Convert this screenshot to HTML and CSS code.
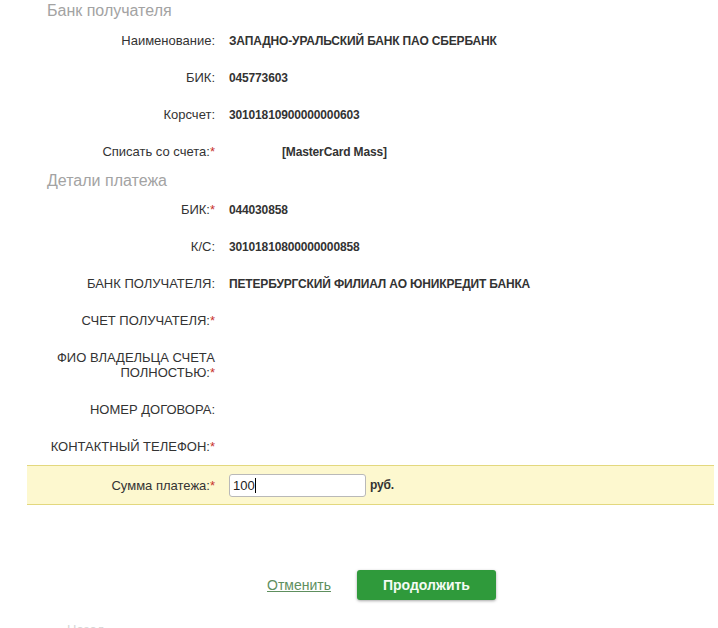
FILE: index.html
```html
<!DOCTYPE html>
<html lang="ru">
<head>
<meta charset="utf-8">
<title>Платеж</title>
<link rel="stylesheet" href="styles.css">
</head>
<body>
<div class="page">
  <div class="heading">Банк получателя</div>
  <div class="row"><div class="label">Наименование:</div><div class="value">ЗАПАДНО-УРАЛЬСКИЙ БАНК ПАО СБЕРБАНК</div></div>
  <div class="row"><div class="label">БИК:</div><div class="value">045773603</div></div>
  <div class="row"><div class="label">Корсчет:</div><div class="value">30101810900000000603</div></div>
  <div class="row"><div class="label">Списать со счета:<span class="req">*</span></div><div class="value value-select">[MasterCard Mass]</div></div>

  <div class="heading heading-2">Детали платежа</div>
  <div class="row"><div class="label">БИК:<span class="req">*</span></div><div class="value">044030858</div></div>
  <div class="row"><div class="label">К/С:</div><div class="value">30101810800000000858</div></div>
  <div class="row"><div class="label">БАНК ПОЛУЧАТЕЛЯ:</div><div class="value">ПЕТЕРБУРГСКИЙ ФИЛИАЛ АО ЮНИКРЕДИТ БАНКА</div></div>
  <div class="row"><div class="label">СЧЕТ ПОЛУЧАТЕЛЯ:<span class="req">*</span></div><div class="value"></div></div>
  <div class="row row-tall"><div class="label">ФИО ВЛАДЕЛЬЦА СЧЕТА<br>ПОЛНОСТЬЮ:<span class="req">*</span></div><div class="value"></div></div>
  <div class="row"><div class="label">НОМЕР ДОГОВОРА:</div><div class="value"></div></div>
  <div class="row"><div class="label">КОНТАКТНЫЙ ТЕЛЕФОН:<span class="req">*</span></div><div class="value"></div></div>

  <div class="row row-sum">
    <div class="label">Сумма платежа:<span class="req">*</span></div>
    <div class="value value-sum"><span class="input">100<span class="caret"></span></span><span class="currency">руб.</span></div>
  </div>

  <div class="actions">
    <a class="cancel" href="#">Отменить</a>
    <button class="submit" type="button">Продолжить</button>
  </div>
  <div class="footnote">Назад</div>
</div>
</body>
</html>
```

FILE: styles.css
```css
html, body {
  margin: 0;
  padding: 0;
  background: #ffffff;
  overflow: hidden;
}

body {
  font-family: "Liberation Sans", Arial, sans-serif;
  color: #333333;
  width: 718px;
  height: 628px;
}

.page {
  padding: 0 4px 0 27px;
}

.heading {
  height: 22px;
  line-height: 22px;
  padding-left: 20px;
  font-size: 16px;
  color: #a3a3a3;
}

.heading-2 {
  height: 21px;
  line-height: 21px;
}

.row {
  display: grid;
  grid-template-columns: 188px 1fr;
  column-gap: 14px;
  align-items: center;
  height: 37px;
}

.row-tall {
  height: 52px;
}

.label {
  text-align: right;
  font-size: 13px;
  line-height: 15px;
  color: #333333;
}

.req {
  color: #c8332c;
}

.value {
  font-size: 12px;
  font-weight: bold;
  color: #333333;
  letter-spacing: -0.15px;
}

.value-select {
  padding-left: 53px;
}

.row-sum {
  box-sizing: border-box;
  height: 40px;
  background: #fdf8cf;
  border-top: 1px solid #e3d87e;
  border-bottom: 1px solid #e3d87e;
}

.value-sum {
  display: flex;
  align-items: center;
  gap: 4px;
}

.input {
  box-sizing: border-box;
  display: flex;
  align-items: center;
  width: 137px;
  height: 23px;
  padding-left: 3px;
  background: #ffffff;
  border: 1px solid #b9b9b9;
  border-radius: 3px;
  font-size: 13px;
  font-weight: normal;
  color: #222222;
  letter-spacing: 0;
}

.caret {
  display: inline-block;
  width: 1px;
  height: 15px;
  background: #000000;
}

.currency {
  font-size: 12px;
  font-weight: bold;
}

.actions {
  display: flex;
  align-items: center;
  margin-top: 65px;
  padding-left: 240px;
  gap: 26px;
}

.cancel {
  font-size: 14px;
  color: #5e8f5e;
  text-decoration: underline;
}

.submit {
  box-sizing: border-box;
  width: 139px;
  height: 30px;
  border: none;
  border-radius: 3px;
  background: #2f9a3b;
  color: #f4fbf4;
  font-family: "Liberation Sans", Arial, sans-serif;
  font-size: 14px;
  font-weight: bold;
  box-shadow: 0 1px 3px rgba(0, 0, 0, 0.35);
  cursor: pointer;
}

.footnote {
  margin-top: 22px;
  padding-left: 40px;
  font-size: 13px;
  line-height: 15px;
  color: #d6d6d6;
}
```
